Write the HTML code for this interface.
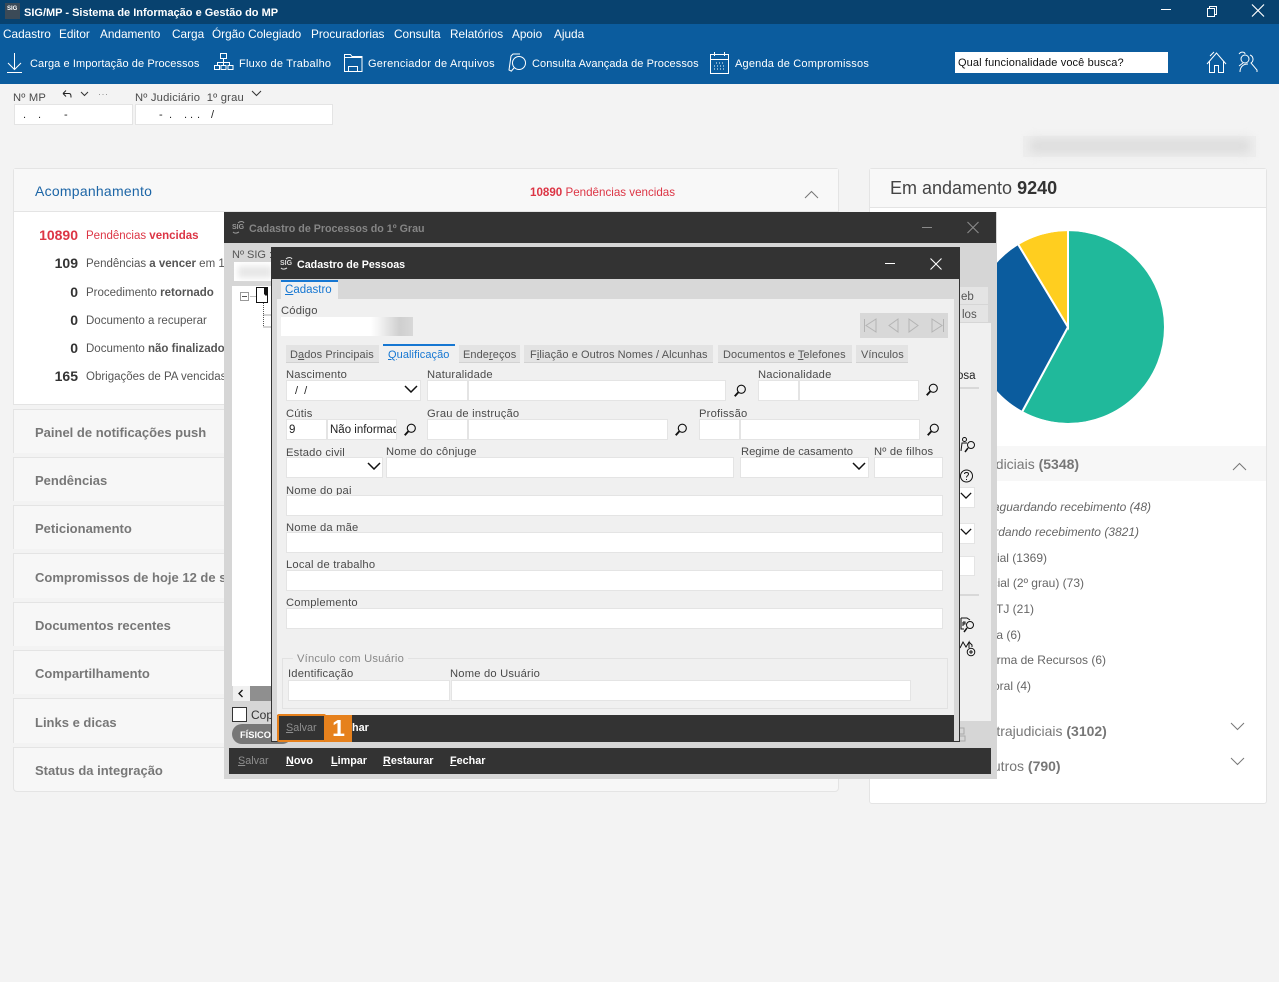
<!DOCTYPE html>
<html lang="pt"><head><meta charset="utf-8"><title>SIG/MP</title>
<style>
html,body{margin:0;padding:0}
body{width:1279px;height:982px;position:relative;overflow:hidden;background:#f3f3f3;font:12px "Liberation Sans",sans-serif;color:#444}
.a,.t,.i{position:absolute}
.t{white-space:nowrap;line-height:14px}
.i{background:#fff;border:1px solid #e4e4e4;box-sizing:border-box}
.m{color:#fff;top:27px;font-size:11.8px}
.b{color:#fff;top:57px;font-size:11px;letter-spacing:.08px}
.l{color:#4a4a4a;font-size:11.2px;letter-spacing:.2px}
.r{background:#f7f7f7;border:1px solid #e4e4e4;border-bottom:0;left:13px;width:826px;box-sizing:border-box;height:44px}
.rt{left:35px;font-size:13px;font-weight:bold;color:#777;line-height:18px}
.n{width:64px;left:14px;text-align:right;font-weight:bold;color:#333;font-size:14px}
.d{left:86px;color:#555;font-size:11.5px}
.st{background:#e3e3e3;border-bottom:1px solid #d2d2d2;height:18px;top:345px;box-sizing:border-box}
.sl{top:348px;color:#555;font-size:11px;letter-spacing:.08px}
.it{color:#666;font-size:12px}
.ft{color:#fff;font-weight:bold;font-size:10.8px}
.h{font-size:14px;line-height:17px;font-weight:bold;color:#777}
u{text-decoration:underline}
svg{position:absolute;overflow:visible}
</style></head><body>
<svg width="0" height="0"><defs>
<symbol id="s" viewBox="0 0 16 16"><circle cx="9.500" cy="6" r="4.600" fill="none" stroke="#111" stroke-width="1.300"/><path d="M6 9.600 2 14" stroke="#111" stroke-width="2.200"/></symbol>
<symbol id="c" viewBox="0 0 14 8"><path d="M1 1l6 6 6-6" fill="none" stroke="#111" stroke-width="1.500"/></symbol>
</defs></svg>

<!-- Title bar -->
<div class="a" style="left:0;top:0;width:1279px;height:24px;background:#08426f"></div>
<div class="a" style="left:5px;top:3px;width:15px;height:16px;background:#3b4a57"></div>
<div class="t" style="left:7px;top:4px;color:#fff;font-size:6px;font-weight:bold;line-height:10px">SIG</div>
<div class="t" style="left:24px;top:6px;color:#fff;font-size:11px;font-weight:bold">SIG/MP - Sistema de Informação e Gestão do MP</div>
<svg style="left:1160px;top:4px" width="100" height="14" fill="none" stroke="#fff"><path d="M1 5.500h10"/><path d="M47.500 4.500h7v8h-7zM49.500 4.500v-2h7v8h-2"/><path d="M92 .5l12 12M104 .5l-12 12" stroke-width="1.200"/></svg>

<!-- Nav -->
<div class="a" style="left:0;top:24px;width:1279px;height:60px;background:#0b5c9e"></div>
<span class="t m" style="left:3px">Cadastro</span><span class="t m" style="left:59px">Editor</span><span class="t m" style="left:100px">Andamento</span><span class="t m" style="left:172px">Carga</span><span class="t m" style="left:212px">Órgão Colegiado</span><span class="t m" style="left:311px">Procuradorias</span><span class="t m" style="left:394px">Consulta</span><span class="t m" style="left:450px">Relatórios</span><span class="t m" style="left:512px">Apoio</span><span class="t m" style="left:554px">Ajuda</span>
<svg style="left:0;top:50px" width="900" height="26" fill="none" stroke="#fff">
<path d="M14.500 3v16M8 13l6.500 6.500L21 13M7 22.500h15"/>
<path d="M220.500 3.500h6v5h-6zM223.500 8.500v4M217.500 15v-2.500h12V15M223.500 12.500V15M214.500 15.500h5v4h-5zM221 15.500h5v4h-5zM228 15.500h5v4h-5z"/>
<path d="M344.500 21.500v-17h6l1.500 2h10v15zM344.500 7.500h17M348.500 21.500v-5h9v5"/>
<path d="M511 21l-2-1 2-14 2-2h7"/><circle cx="519" cy="13" r="6.500"/><path d="M514 18l-3 3.500"/>
<path d="M710.500 4.500h18v19h-18zM710.500 9.500h18M714.500 2v4M724.500 2v4"/><path d="M716 13h8M714 16h11M714 19h11" stroke-dasharray="1 2"/>
<path d="M1207 14l9.500-11 9.500 11M1209.500 11.500v11h5v-7h4v7h5v-11M1214 2l-4 4"/>
<circle cx="1245" cy="9" r="4"/><path d="M1239 16l4-3M1239 4c2-3 6-2 6 0M1250 5a4.500 4.500 0 0 1 1 8l6 7v2M1240 22c0-6 4-8 8-8"/>
</svg>
<span class="t b" style="left:30px">Carga e Importação de Processos</span><span class="t b" style="left:239px;letter-spacing:.25px">Fluxo de Trabalho</span><span class="t b" style="left:368px;letter-spacing:.25px">Gerenciador de Arquivos</span><span class="t b" style="left:532px">Consulta Avançada de Processos</span><span class="t b" style="left:735px;letter-spacing:.2px">Agenda de Compromissos</span>
<div class="a" style="left:955px;top:52px;width:213px;height:21px;background:#fff"></div>
<span class="t" style="left:958px;top:56px;color:#111;font-size:11px;letter-spacing:.12px">Qual funcionalidade você busca?</span>

<!-- Number row -->
<span class="t l" style="left:13px;top:91px">Nº MP</span>
<svg style="left:60px;top:88px" width="210" height="14" fill="none" stroke="#222"><path d="M3 5.500l3-3M3 5.500l3 3M3 5.500h6c2 0 2 2 2 4"/><path d="M21 4l3.500 3.500L28 4" stroke="#333"/><path d="M39 6.500h1M42.500 6.500h1M46 6.500h1" stroke="#999"/><path d="M192 3l4.500 4.500L201 3" stroke="#333"/></svg>
<span class="t l" style="left:135px;top:91px">Nº Judiciário&nbsp; 1º grau</span>
<div class="i" style="left:14px;top:104px;width:119px;height:21px"></div>
<div class="i" style="left:135px;top:104px;width:198px;height:21px"></div>
<span class="t" style="left:23px;top:108px;color:#222;font-size:11px">.</span><span class="t" style="left:38px;top:108px;color:#222;font-size:11px">.</span><span class="t" style="left:64px;top:108px;color:#222;font-size:11px">-</span>
<span class="t" style="left:159px;top:108px;color:#222;font-size:11px">-</span><span class="t" style="left:169px;top:108px;color:#222;font-size:11px">.</span><span class="t" style="left:184px;top:108px;color:#222;font-size:11px">.</span><span class="t" style="left:190px;top:108px;color:#222;font-size:11px">.</span><span class="t" style="left:197px;top:108px;color:#222;font-size:11px">.</span><span class="t" style="left:211px;top:108px;color:#222;font-size:11px">/</span>
<div class="a" style="left:1023px;top:136px;width:233px;height:21px;background:#eeeeee"></div>
<div class="a" style="left:1030px;top:139px;width:220px;height:14px;background:#dcdcdc;filter:blur(5px)"></div>

<!-- Left card -->
<div class="a" style="left:13px;top:168px;width:826px;height:237px;background:#fff;border:1px solid #e4e4e4;box-sizing:border-box;border-radius:3px 3px 0 0"></div>
<div class="a" style="left:14px;top:169px;width:824px;height:43px;background:#f8f8f8;border-bottom:1px solid #e4e4e4;box-sizing:border-box"></div>
<span class="t" style="left:35px;top:183px;color:#1c65a6;font-size:14px;line-height:16px;letter-spacing:.25px">Acompanhamento</span>
<span class="t" style="left:530px;top:186px;color:#dc3545;font-size:11.6px"><b>10890</b> Pendências vencidas</span>
<svg style="left:804px;top:190px" width="16" height="10" fill="none" stroke="#777"><path d="M1 8l6.500-6.500L14 8"/></svg>
<span class="t n" style="top:228px;color:#dc3545">10890</span><span class="t d" style="top:229px;color:#dc3545">Pendências <b>vencidas</b></span>
<span class="t n" style="top:256px">109</span><span class="t d" style="top:257px">Pendências <b>a vencer</b> em 15 dias</span>
<span class="t n" style="top:285px">0</span><span class="t d" style="top:286px">Procedimento <b>retornado</b></span>
<span class="t n" style="top:313px">0</span><span class="t d" style="top:314px">Documento a recuperar</span>
<span class="t n" style="top:341px">0</span><span class="t d" style="top:342px">Documento <b>não finalizado</b></span>
<span class="t n" style="top:369px">165</span><span class="t d" style="top:370px">Obrigações de PA vencidas</span>

<div class="a r" style="top:409px"></div><span class="t rt" style="top:424px">Painel de notificações push</span>
<div class="a r" style="top:457px"></div><span class="t rt" style="top:472px">Pendências</span>
<div class="a r" style="top:505px"></div><span class="t rt" style="top:520px">Peticionamento</span>
<div class="a r" style="top:553px;height:45px"></div><span class="t rt" style="top:569px">Compromissos de hoje 12 de setembro</span>
<div class="a r" style="top:602px"></div><span class="t rt" style="top:617px">Documentos recentes</span>
<div class="a r" style="top:650px"></div><span class="t rt" style="top:665px">Compartilhamento</span>
<div class="a r" style="top:698px;height:45px"></div><span class="t rt" style="top:714px">Links e dicas</span>
<div class="a r" style="top:747px;height:45px;border-bottom:1px solid #e4e4e4;border-radius:0 0 4px 4px"></div><span class="t rt" style="top:762px">Status da integração</span>

<!-- Right card -->
<div class="a" style="left:869px;top:168px;width:398px;height:636px;background:#fff;border:1px solid #e4e4e4;box-sizing:border-box;border-radius:3px"></div>
<div class="a" style="left:870px;top:169px;width:396px;height:39px;background:#f8f8f8;border-bottom:1px solid #e4e4e4;box-sizing:border-box"></div>
<span class="t" style="left:890px;top:178px;font-size:18px;line-height:20px;color:#444">Em andamento <b style="color:#333">9240</b></span>
<svg style="left:960px;top:220px" width="220" height="220"><g stroke="#fff" stroke-width="2" transform="translate(108 107)"><path d="M0 0V-97A97 97 0 1 1 -46 85Z" fill="#20b99b"/><path d="M0 0L-46 85A97 97 0 0 1 -50 -83Z" fill="#0b5c9e"/><path d="M0 0L-50 -83A97 97 0 0 1 0 -97Z" fill="#ffce1f"/></g><circle cx="108" cy="107" r="97.500" fill="none" stroke="#fff" stroke-width="3"/></svg>
<div class="a" style="left:870px;top:446px;width:396px;height:35px;background:#f7f7f7"></div>
<span class="t h" style="left:981px;top:456px"><span style="font-weight:normal">Judiciais</span> (5348)</span>
<svg style="left:1232px;top:462px" width="16" height="10" fill="none" stroke="#777"><path d="M1 8l6.500-6.500L14 8"/></svg>
<i class="t it" style="top:500px;right:128px">Processos aguardando recebimento (48)</i>
<i class="t it" style="top:525px;right:140px">Aguardando recebimento (3821)</i>
<span class="t it" style="top:551px;right:232px">Judicial (1369)</span>
<span class="t it" style="top:576px;right:195px">Judicial (2º grau) (73)</span>
<span class="t it" style="top:602px;right:245px">No STJ (21)</span>
<span class="t it" style="top:628px;right:258px">Turma (6)</span>
<span class="t it" style="top:653px;right:173px">Na Turma de Recursos (6)</span>
<span class="t it" style="top:679px;right:248px">Temporal (4)</span>
<span class="t h" style="left:980px;top:723px"><span style="font-weight:normal">Extrajudiciais</span> (3102)</span>
<span class="t h" style="left:982px;top:758px"><span style="font-weight:normal">Outros</span> (790)</span>
<svg style="left:1230px;top:722px" width="16" height="50" fill="none" stroke="#777"><path d="M1 1l6.500 6.500L14 1M1 36l6.500 6.500L14 36"/></svg>

<!-- Outer dialog -->
<div class="a" style="left:224px;top:212px;width:773px;height:567px;background:#d6d6d6"></div>
<div class="a" style="left:224px;top:212px;width:772px;height:31px;background:#333"></div>
<span class="t" style="left:232px;top:222px;color:#9a9a9a;font-size:7px;font-weight:bold;line-height:12px">SIG</span>
<svg style="left:232px;top:220px" width="14" height="14" fill="none" stroke="#9a9a9a"><path d="M6 3c2-2 5-2 6 0M1 12c2 2 4 1 6 0"/></svg>
<span class="t" style="left:249px;top:222px;color:#858585;font-weight:bold;font-size:10.700px">Cadastro de Processos do 1º Grau</span>
<svg style="left:920px;top:220px" width="66" height="16" fill="none" stroke="#8a8a8a"><path d="M2 7.500h10M47.500 2l11 11M58.500 2l-11 11" stroke-width="1.100"/></svg>
<span class="t" style="left:232px;top:248px;color:#555;font-size:11px">Nº SIG :</span>
<div class="a" style="left:234px;top:262px;width:40px;height:19px;background:#fff"></div>
<div class="a" style="left:238px;top:266px;width:34px;height:12px;background:#e8e8e8;filter:blur(3px)"></div>
<div class="a" style="left:232px;top:286px;width:42px;height:400px;background:#fff"></div>
<div class="a" style="left:240px;top:292px;width:9px;height:9px;border:1px solid #999;box-sizing:border-box;background:#fff"></div>
<div class="a" style="left:242px;top:296px;width:5px;height:1px;background:#555"></div>
<svg style="left:250px;top:287px" width="24" height="42" fill="none"><path d="M6.500.5h11v15h-11z" fill="#fff" stroke="#111"/><path d="M14 0h4v7l-2 2-2-2z" fill="#111"/><path d="M13.500 16v24M13.500 28h8M13.500 40h8" stroke="#555" stroke-dasharray="1 1"/><path d="M.5 9.500h5" stroke="#777" stroke-dasharray="1 1"/></svg>
<div class="a" style="left:233px;top:686px;width:40px;height:15px;background:#f0f0f0"></div>
<div class="a" style="left:250px;top:686px;width:23px;height:15px;background:#8f8f8f"></div>
<svg style="left:237px;top:689px" width="8" height="10" fill="none" stroke="#111" stroke-width="1.300"><path d="M5.500 1l-3.500 3.500L5.500 8"/></svg>
<div class="a" style="left:232px;top:707px;width:15px;height:15px;background:#fff;border:1px solid #333;box-sizing:border-box"></div>
<span class="t" style="left:251px;top:708px;color:#333">Cop</span>
<div class="a" style="left:232px;top:724px;width:60px;height:20px;background:#777;border-radius:10px"></div>
<span class="t" style="left:240px;top:728px;color:#fff;font-weight:bold;font-size:9.300px">FÍSICO</span>
<!-- outer right pieces -->
<div class="a" style="left:955px;top:287px;width:33px;height:17px;background:#e4e4e4"></div>
<div class="a" style="left:955px;top:305px;width:33px;height:17px;background:#e4e4e4"></div>
<span class="t" style="left:961px;top:290px;color:#555;font-size:11.500px">eb</span>
<span class="t" style="left:962px;top:308px;color:#555;font-size:11.500px">los</span>
<div class="a" style="left:955px;top:323px;width:36px;height:398px;background:#f0f0f0"></div>
<span class="t" style="left:957px;top:369px;color:#222;font-size:11.500px">osa</span>
<div class="a" style="left:955px;top:387px;width:24px;height:2px;background:#d8d8d8"></div>
<div class="a" style="left:955px;top:594px;width:24px;height:2px;background:#d8d8d8"></div>
<div class="i" style="left:955px;top:487px;width:20px;height:21px"></div>
<div class="i" style="left:955px;top:523px;width:20px;height:21px"></div>
<div class="i" style="left:955px;top:556px;width:20px;height:20px"></div>
<svg style="left:960px;top:492px" width="14" height="48"><use href="#c" x="0" y="0" width="12" height="7"/><use href="#c" x="0" y="36" width="12" height="7"/></svg>
<svg style="left:958px;top:436px" width="20" height="222" fill="none" stroke="#111"><circle cx="6.500" cy="3.500" r="2"/><path d="M3 15l1-8h5"/><circle cx="13" cy="9" r="3.500"/><path d="M10 12l-3 4" stroke-width="1.500"/><circle cx="8.500" cy="40" r="6"/><path d="M6.500 38c0-2 4-2 4 0s-2 1.500-2 3.500M8.500 43v1"/><path d="M3 182h6l3 2M3 182v11h3M5 186v4M5 186h2v2H5"/><circle cx="12" cy="189" r="3.500"/><path d="M9 192l-3 4" stroke-width="1.500"/><path d="M2 212l3-6 3 5 3-5v6M11 206l3 3v2"/><circle cx="13" cy="216" r="3.800"/><path d="M13 214v4M11 216h4"/></svg>
<svg style="left:956px;top:727px" width="10" height="16" fill="none" stroke="#aaa"><path d="M2 1h6v6H2zM1 9h8v5H1z"/></svg>
<div class="a" style="left:229px;top:748px;width:762px;height:26px;background:#333"></div>
<span class="t ft" style="left:238px;top:754px;color:#8f8f8f;font-weight:normal"><u>S</u>alvar</span>
<span class="t ft" style="left:286px;top:754px"><u>N</u>ovo</span>
<span class="t ft" style="left:331px;top:754px"><u>L</u>impar</span>
<span class="t ft" style="left:383px;top:754px"><u>R</u>estaurar</span>
<span class="t ft" style="left:450px;top:754px"><u>F</u>echar</span>

<!-- Inner dialog -->
<div class="a" style="left:271px;top:247px;width:689px;height:495px;background:#d8d8d8;border:1px solid #333;border-top:0;box-sizing:border-box"></div>
<div class="a" style="left:271px;top:247px;width:689px;height:32px;background:#333"></div>
<span class="t" style="left:280px;top:258px;color:#ddd;font-size:7px;font-weight:bold;line-height:12px">SIG</span>
<svg style="left:280px;top:256px" width="14" height="14" fill="none" stroke="#ddd"><path d="M6 3c2-2 5-2 6 0M1 12c2 2 4 1 6 0"/></svg>
<span class="t" style="left:297px;top:258px;color:#fff;font-weight:bold;font-size:10.700px">Cadastro de Pessoas</span>
<svg style="left:884px;top:257px" width="60" height="16" fill="none" stroke="#fff"><path d="M1 6.500h10M46.500 1.500l11 11M57.500 1.500l-11 11" stroke-width="1.100"/></svg>
<div class="a" style="left:277px;top:299px;width:677px;height:416px;background:#f0f0f0"></div>
<div class="a" style="left:281px;top:280px;width:57px;height:19px;background:#f0f0f0;border-top:2px solid #1677d2;box-sizing:border-box"></div>
<span class="t" style="left:285px;top:283px;color:#1677d2;font-size:11.500px"><u>C</u>adastro</span>
<span class="t l" style="left:281px;top:304px">Código</span>
<div class="a" style="left:281px;top:317px;width:132px;height:19px;background:linear-gradient(90deg,#fff 0,#fff 68%,#f4f4f4 74%,#cfcfcf 90%,#d8d8d8 100%)"></div>
<div class="a" style="left:860px;top:313px;width:88px;height:25px;background:#d8d8d8"></div>
<svg style="left:860px;top:313px" width="88" height="25" fill="none" stroke="#b4b4b4"><path d="M4.500 6v13M16 6l-10 6.500L16 19zM38 6L29 12.500 38 19zM49 6l9 6.500L49 19zM72 6l10 6.500L72 19zM83.500 6v13"/></svg>

<div class="a st" style="left:286px;width:93px"></div><span class="t sl" style="left:290px">D<u>a</u>dos Principais</span>
<div class="a" style="left:383px;top:344px;width:72px;height:2px;background:#1677d2"></div><span class="t sl" style="left:388px;color:#1677d2"><u>Q</u>ualificação</span>
<div class="a st" style="left:459px;width:61px"></div><span class="t sl" style="left:463px">Ende<u>r</u>eços</span>
<div class="a st" style="left:524px;width:189px"></div><span class="t sl" style="left:530px">F<u>i</u>liação e Outros Nomes / Alcunhas</span>
<div class="a st" style="left:718px;width:134px"></div><span class="t sl" style="left:723px">Documentos e <u>T</u>elefones</span>
<div class="a st" style="left:856px;width:52px"></div><span class="t sl" style="left:861px">Vínculos</span>

<span class="t l" style="left:286px;top:368px">Nascimento</span><span class="t l" style="left:427px;top:368px">Naturalidade</span><span class="t l" style="left:758px;top:368px">Nacionalidade</span>
<div class="i" style="left:286px;top:380px;width:135px;height:21px"></div>
<span class="t" style="left:295px;top:384px;color:#222;font-size:11px;white-space:pre">/  /</span>
<svg style="left:404px;top:385px" width="14" height="8"><use href="#c" width="14" height="8"/></svg>
<div class="i" style="left:427px;top:380px;width:41px;height:21px"></div><div class="i" style="left:468px;top:380px;width:258px;height:21px"></div>
<svg style="left:733px;top:384px" width="14" height="14"><use href="#s" width="14" height="14"/></svg>
<div class="i" style="left:758px;top:380px;width:41px;height:21px"></div><div class="i" style="left:799px;top:380px;width:120px;height:21px"></div>
<svg style="left:925px;top:383px" width="14" height="14"><use href="#s" width="14" height="14"/></svg>

<span class="t l" style="left:286px;top:407px">Cútis</span><span class="t l" style="left:427px;top:407px">Grau de instrução</span><span class="t l" style="left:699px;top:407px">Profissão</span>
<div class="i" style="left:286px;top:419px;width:41px;height:21px"></div><div class="i" style="left:327px;top:419px;width:70px;height:21px;overflow:hidden"><span class="t" style="left:2px;top:3px;color:#222;font-size:11.500px">Não informado</span></div>
<span class="t" style="left:289px;top:423px;color:#222;font-size:11.500px">9</span>
<svg style="left:403px;top:423px" width="14" height="14"><use href="#s" width="14" height="14"/></svg>
<div class="i" style="left:427px;top:419px;width:41px;height:21px"></div><div class="i" style="left:468px;top:419px;width:200px;height:21px"></div>
<svg style="left:674px;top:423px" width="14" height="14"><use href="#s" width="14" height="14"/></svg>
<div class="i" style="left:699px;top:419px;width:41px;height:21px"></div><div class="i" style="left:740px;top:419px;width:180px;height:21px"></div>
<svg style="left:926px;top:423px" width="14" height="14"><use href="#s" width="14" height="14"/></svg>

<span class="t l" style="left:286px;top:446px">Estado civil</span><span class="t l" style="left:386px;top:445px">Nome do cônjuge</span><span class="t l" style="left:741px;top:445px;letter-spacing:0">Regime de casamento</span><span class="t l" style="left:874px;top:445px">Nº de filhos</span>
<div class="i" style="left:286px;top:457px;width:97px;height:21px"></div>
<svg style="left:367px;top:462px" width="14" height="8"><use href="#c" width="14" height="8"/></svg>
<div class="i" style="left:386px;top:457px;width:348px;height:21px"></div>
<div class="i" style="left:740px;top:457px;width:129px;height:21px"></div>
<svg style="left:852px;top:462px" width="14" height="8"><use href="#c" width="14" height="8"/></svg>
<div class="i" style="left:874px;top:457px;width:69px;height:21px"></div>

<span class="t l" style="left:286px;top:484px">Nome do pai</span><div class="i" style="left:286px;top:495px;width:657px;height:21px"></div>
<span class="t l" style="left:286px;top:521px">Nome da mãe</span><div class="i" style="left:286px;top:532px;width:657px;height:21px"></div>
<span class="t l" style="left:286px;top:558px">Local de trabalho</span><div class="i" style="left:286px;top:570px;width:657px;height:21px"></div>
<span class="t l" style="left:286px;top:596px">Complemento</span><div class="i" style="left:286px;top:608px;width:657px;height:21px"></div>

<div class="a" style="left:282px;top:658px;width:666px;height:51px;border:1px solid #e2e2e2;box-sizing:border-box"></div>
<span class="t l" style="left:293px;top:652px;background:#f0f0f0;padding:0 4px;color:#888">Vínculo com Usuário</span>
<span class="t l" style="left:288px;top:667px">Identificação</span><span class="t l" style="left:450px;top:667px">Nome do Usuário</span>
<div class="i" style="left:288px;top:680px;width:162px;height:21px"></div><div class="i" style="left:451px;top:680px;width:460px;height:21px"></div>

<div class="a" style="left:277px;top:715px;width:677px;height:26px;background:#333"></div>
<span class="t ft" style="left:352px;top:721px">har</span>
<div class="a" style="left:277px;top:714px;width:49px;height:28px;border:2px solid #e6811d;box-sizing:border-box;border-radius:2px"></div>
<span class="t ft" style="left:286px;top:721px;color:#8f8f8f;font-weight:normal"><u>S</u>alvar</span>
<div class="a" style="left:325px;top:715px;width:27px;height:27px;background:#e6811d"></div>
<span class="t" style="left:325px;top:716px;width:27px;text-align:center;color:#fff;font-weight:bold;font-size:23px;line-height:24px">1</span>
</body></html>
